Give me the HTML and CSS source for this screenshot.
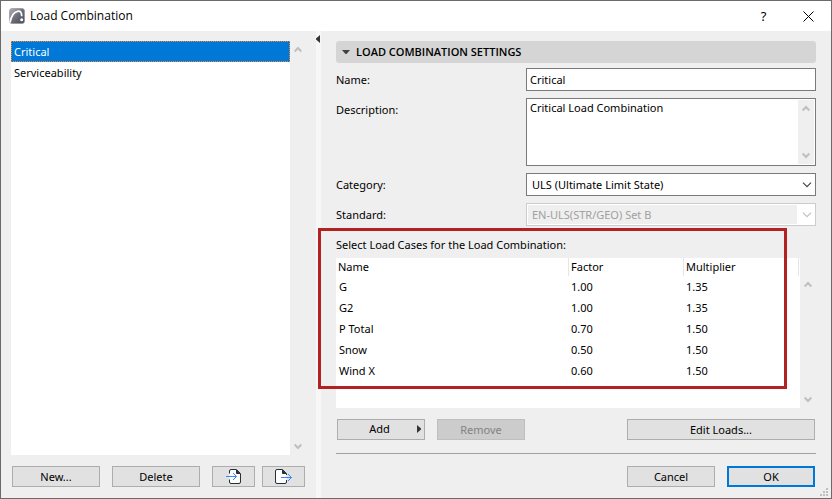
FILE: index.html
```html
<!DOCTYPE html>
<html lang="en">
<head>
    <meta charset="UTF-8">
    <meta name="viewport" content="width=device-width, initial-scale=1.0">
    <title>Load Combination</title>
    <link rel="stylesheet" href="styles.css">
</head>
<body>
    <div class="window">
        <header class="titlebar">
            <svg class="app-icon" width="16" height="16" viewBox="0 0 16 16">
                <defs>
                    <linearGradient id="iconFill" x1="0" y1="0" x2="1" y2="1">
                        <stop offset="0" stop-color="#b4b4bc"/>
                        <stop offset="0.5" stop-color="#6e6e7a"/>
                        <stop offset="1" stop-color="#484854"/>
                    </linearGradient>
                </defs>
                <rect x="0.5" y="0.5" width="15" height="15" rx="2.5" fill="url(#iconFill)" stroke="#8c8c96" stroke-width="0.6"/>
                <path d="M1 14.500C2 9 4.500 4 8.500 3.300c3-.5 4 .7 4.300 5" fill="none" stroke="#fff" stroke-width="1.700"/>
                <circle cx="12.700" cy="11.800" r="1.500" fill="#fff"/>
            </svg>
            <h1>Load Combination</h1>
            <button class="title-button" aria-label="Help">?</button>
            <button class="title-button" aria-label="Close">
                <svg width="11" height="11" viewBox="0 0 11 11"><path d="M.5.5l10 10M10.500.5l-10 10" stroke="#000" stroke-width="1"/></svg>
            </button>
        </header>

        <main class="content">
            <section class="sidebar">
                <div class="list-area">
                    <ul class="list" role="listbox" aria-label="Load combinations">
                        <li class="selected" role="option" aria-selected="true">Critical</li>
                        <li role="option" aria-selected="false">Serviceability</li>
                    </ul>
                    <div class="scrollbar">
                        <svg width="8" height="7" viewBox="0 0 8 7"><path d="M.7 5.500L4 2l3.300 3.500"/></svg>
                        <svg width="8" height="7" viewBox="0 0 8 7"><path d="M.7 1.500L4 5l3.300-3.500"/></svg>
                    </div>
                </div>
                <div class="buttons">
                    <button class="btn">New...</button>
                    <button class="btn">Delete</button>
                    <div class="icon-buttons">
                        <button class="btn btn-icon" aria-label="Import">
                            <svg width="17" height="15" viewBox="0 0 17 15" fill="none">
                                <path d="M4.500 4.500V2q0-1.500 1.500-1.500h5.500l4 4V13q0 1.500-1.500 1.500H6q-1.500 0-1.500-1.500v-2.500" fill="#fff" stroke="#263038"/>
                                <path d="M11.500 1v3.500H15z" fill="#263038" stroke="#263038"/>
                                <path d="M1 7.500h10.500M8 4l3.500 3.500L8 11" stroke="#3586ff"/>
                            </svg>
                        </button>
                        <button class="btn btn-icon" aria-label="Export">
                            <svg width="17" height="15" viewBox="0 0 17 15" fill="none">
                                <path d="M11.500 11v2q0 1.500-1.500 1.500H2Q.5 14.500.5 13V2Q.5.5 2 .5h5.500l4 4V6" fill="#fff" stroke="#263038"/>
                                <path d="M7.500 1v3.500H11z" fill="#263038" stroke="#263038"/>
                                <path d="M6 8.500h10.500M13 5l3.500 3.500L13 12" stroke="#3586ff"/>
                            </svg>
                        </button>
                    </div>
                </div>
            </section>

            <div class="splitter">
                <svg width="4" height="8" viewBox="0 0 4 8"><path d="M4 0v8L0 4.500v-1z" fill="#333"/></svg>
            </div>

            <section class="settings">
                <h2>
                    <svg width="8" height="4" viewBox="0 0 8 4"><path d="M0 0h8L4.500 4h-1z" fill="#404040"/></svg>
                    LOAD COMBINATION SETTINGS
                </h2>

                <form class="form">
                    <label for="name">Name:</label>
                    <input class="field" type="text" id="name" value="Critical">

                    <label for="description">Description:</label>
                    <div class="field description">
                        <textarea id="description">Critical Load Combination</textarea>
                        <div class="scrollbar">
                            <svg width="8" height="7" viewBox="0 0 8 7"><path d="M.7 5.500L4 2l3.300 3.500"/></svg>
                            <svg width="8" height="7" viewBox="0 0 8 7"><path d="M.7 1.500L4 5l3.300-3.500"/></svg>
                        </div>
                    </div>

                    <label for="category">Category:</label>
                    <div class="select">
                        <select class="field" id="category">
                            <option>ULS (Ultimate Limit State)</option>
                        </select>
                        <svg width="10" height="6" viewBox="0 0 10 6"><path d="M1 .7l4 4 4-4"/></svg>
                    </div>

                    <label for="standard">Standard:</label>
                    <div class="select disabled">
                        <select class="field" id="standard" disabled>
                            <option>EN-ULS(STR/GEO) Set B</option>
                        </select>
                        <svg width="10" height="6" viewBox="0 0 10 6"><path d="M1 .7l4 4 4-4"/></svg>
                    </div>
                </form>

                <div class="cases">
                    <h3>Select Load Cases for the Load Combination:</h3>
                    <div class="cases-list">
                        <div class="table-wrap">
                            <table>
                                <thead>
                                    <tr><th>Name</th><th class="number">Factor</th><th class="number">Multiplier</th></tr>
                                </thead>
                                <tbody>
                                    <tr><td>G</td><td>1.00</td><td>1.35</td></tr>
                                    <tr><td>G2</td><td>1.00</td><td>1.35</td></tr>
                                    <tr><td>P Total</td><td>0.70</td><td>1.50</td></tr>
                                    <tr><td>Snow</td><td>0.50</td><td>1.50</td></tr>
                                    <tr><td>Wind X</td><td>0.60</td><td>1.50</td></tr>
                                </tbody>
                            </table>
                        </div>
                        <div class="scrollbar">
                            <svg width="8" height="7" viewBox="0 0 8 7"><path d="M.7 5.500L4 2l3.300 3.500"/></svg>
                            <svg width="8" height="7" viewBox="0 0 8 7"><path d="M.7 1.500L4 5l3.300-3.500"/></svg>
                        </div>
                    </div>
                    <div class="highlight"></div>
                </div>

                <div class="case-buttons">
                    <button class="btn btn-menu">
                        Add
                        <svg width="4" height="8" viewBox="0 0 4 8"><path d="M0 0v8l4-3.500v-1z" fill="#333"/></svg>
                    </button>
                    <button class="btn" disabled>Remove</button>
                    <button class="btn btn-wide">Edit Loads...</button>
                </div>

                <footer class="footer">
                    <button class="btn">Cancel</button>
                    <button class="btn btn-default">OK</button>
                </footer>
            </section>
        </main>

        <svg class="grip" width="8" height="8" viewBox="0 0 8 8" fill="#bfbfbf">
            <path d="M6 0h2v2H6zM3 3h2v2H3zM6 3h2v2H6zM0 6h2v2H0zM3 6h2v2H3zM6 6h2v2H6z"/>
        </svg>
    </div>
</body>
</html>
```
FILE: styles.css
```css
* {
    box-sizing: border-box;
}
body {
    margin: 0;
    font-family: "Noto Sans", "Open Sans", sans-serif;
    font-size: 11px;
    line-height: 16px;
    color: #000;
}
h1, h2, h3, ul {
    margin: 0;
    padding: 0;
    font-size: 11px;
    font-weight: normal;
}
button, input, select, textarea {
    font: inherit;
    color: inherit;
    margin: 0;
}
svg {
    display: block;
    flex: none;
}
.window {
    position: relative;
    display: flex;
    flex-direction: column;
    min-height: 100vh;
    border: 1px solid #6b6b6b;
    background: #efefef;
}

/* title bar */
.titlebar {
    display: flex;
    align-items: center;
    height: 30px;
    padding-left: 8px;
    background: #fff;
}
.titlebar h1 {
    flex: 1;
    margin-left: 5px;
    font-family: "Open Sans", "Noto Sans", sans-serif;
    font-size: 12px;
}
.title-button {
    display: flex;
    align-items: center;
    justify-content: center;
    width: 45px;
    height: 28px;
    padding: 0;
    border: none;
    background: none;
    font-size: 13px;
}
.content {
    display: flex;
    flex: 1;
}

/* left side */
.sidebar {
    display: flex;
    flex-direction: column;
    width: 315px;
    padding: 10px 10px 11px;
}
.list-area {
    display: flex;
    flex: 1;
}
.list {
    flex: 1;
    background: #fff;
    list-style: none;
}
.list li {
    height: 21px;
    padding: 0 3px;
    line-height: 21px;
}
.list .selected {
    padding: 0 2px;
    border: 1px dotted #ff8728;
    background: #0078d7;
    color: #fff;
    line-height: 19px;
}
.scrollbar {
    display: flex;
    flex-direction: column;
    align-items: center;
    justify-content: space-between;
    width: 16px;
    padding: 5px 0;
    background: #efefef;
}
.scrollbar path {
    fill: none;
    stroke: #bfbfbf;
    stroke-width: 2;
}
.buttons {
    display: flex;
    gap: 12px;
    margin-top: 11px;
    padding-left: 1px;
}
.icon-buttons {
    display: flex;
    gap: 7px;
}
.btn {
    display: flex;
    align-items: center;
    justify-content: center;
    width: 88px;
    height: 21px;
    padding: 0;
    border: 1px solid #adadad;
    background: #e1e1e1;
}
.btn:disabled {
    border-color: #bfbfbf;
    background: #ccc;
    color: #838383;
}
.btn-icon {
    width: 43px;
}
.btn-wide {
    width: 188px;
    margin-left: auto;
}
.btn-default {
    border: 2px solid #0078d7;
}
.splitter {
    width: 5px;
    padding-top: 4px;
    background: #f7f7f7;
}

/* right side */
.settings {
    flex: 1;
    min-width: 0;
    padding: 10px 15px 11px;
}
.settings h2 {
    display: flex;
    align-items: center;
    gap: 6px;
    height: 22px;
    padding-left: 6px;
    border-radius: 3px;
    background: #d5d5d5;
    font-family: "Open Sans", "Noto Sans", sans-serif;
    font-weight: 600;
}
.form {
    display: grid;
    grid-template-columns: 190px 1fr;
    row-gap: 7px;
    margin-top: 5px;
}
.form label {
    line-height: 23px;
}
.field {
    width: 100%;
    height: 23px;
    padding: 0 3px;
    border: 1px solid #7a7a7a;
    border-radius: 0;
    background: #fff;
}
.description {
    display: flex;
    height: 68px;
    padding: 1px;
}
.description textarea {
    flex: 1;
    min-width: 0;
    padding: 0 2px;
    border: none;
    resize: none;
}
.select {
    position: relative;
}
.select .field {
    padding: 0 5px;
    appearance: none;
}
.select svg {
    position: absolute;
    top: 9px;
    right: 4px;
    pointer-events: none;
}
.select path {
    fill: none;
    stroke: #444;
    stroke-width: 1.2;
}
.disabled .field {
    border-color: #ccc;
    background: linear-gradient(#efefef, #efefef) 1px 1px / calc(100% - 19px) calc(100% - 2px) no-repeat #fff;
    color: #a0a0a0;
    opacity: 1;
}
.disabled path {
    stroke: #bfbfbf;
}

/* load cases */
.cases {
    position: relative;
    margin-top: 11px;
}
.cases-list {
    display: flex;
    height: 150px;
    margin-top: 5px;
}
.cases-list .scrollbar {
    padding-top: 23px;
}
.table-wrap {
    flex: 1;
    padding-right: 1px;
    background: #fff;
}
table {
    width: 100%;
    table-layout: fixed;
    border-collapse: separate;
    border-spacing: 0;
}
th, td {
    height: 21px;
    padding: 0 2px;
    font-weight: normal;
    text-align: left;
}
td:first-child {
    padding-left: 3px;
}
th {
    height: 18px;
    border-right: 1px solid #e5e5e5;
}
.number {
    width: 115px;
}
.highlight {
    position: absolute;
    top: -9px;
    right: 29px;
    bottom: 19px;
    left: -18px;
    border: 3px solid #b22222;
    pointer-events: none;
}
.case-buttons {
    display: flex;
    gap: 12px;
    margin-top: 11px;
    padding: 0 1px;
}
.btn-menu {
    position: relative;
    padding: 0 3px 2px 0;
}
.btn-menu svg {
    position: absolute;
    right: 3px;
}
.footer {
    display: flex;
    justify-content: flex-end;
    gap: 12px;
    margin-top: 13px;
    padding: 12px 1px 0;
    border-top: 1px solid #a0a0a0;
}
.grip {
    position: absolute;
    right: 3px;
    bottom: 2px;
}
```
